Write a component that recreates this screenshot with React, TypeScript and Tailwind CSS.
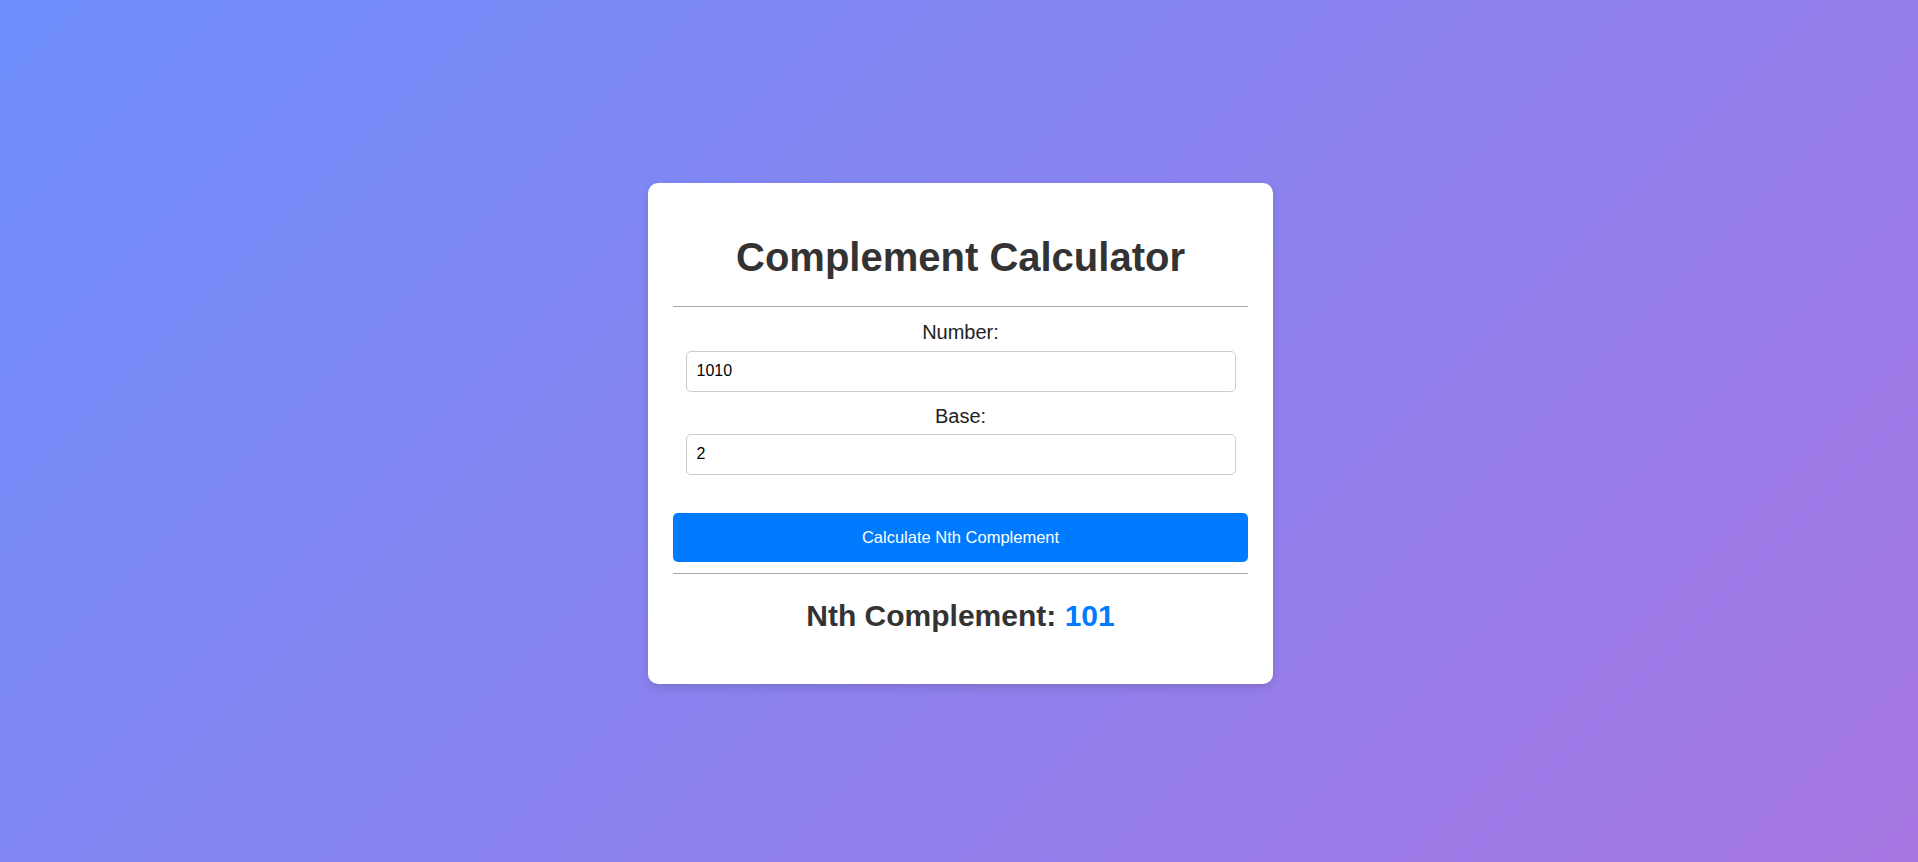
import { useState } from 'react';

function nthComplement(num: string, base: number): string {
    if (!num || !base || base < 2) return '';
    const digits = num.split('').map((d) => parseInt(d, base));
    if (digits.some((d) => isNaN(d))) return '';
    // base^n minus the number
    const n = digits.length;
    const value = parseInt(num, base);
    const result = Math.pow(base, n) - value;
    return result.toString(base).toUpperCase();
}

export default function App() {
    const [number, setNumber] = useState('1010');
    const [base, setBase] = useState('2');
    const [result, setResult] = useState('101');

    return (
        <div
            className="min-h-screen w-full flex items-center justify-center pt-[4px] pl-[3px] bg-[linear-gradient(135deg,#6e8efb,#a777e3)]"
            style={{ fontFamily: '"Liberation Sans", Arial, sans-serif' }}
        >
            <div className="w-[625px] bg-white rounded-[10px] px-[25px] pt-[25px] pb-[25px] shadow-[0_4px_8px_rgba(0,0,0,0.12)]">
                <h1 className="text-[40px] leading-[46px] font-bold text-[#333] text-center mt-[26px] mb-[26px]">
                    Complement Calculator
                </h1>
                <div className="h-px bg-[#a8a8a8]" />

                <label className="block text-[20px] leading-[23px] text-[#222] text-center mt-[14px]">
                    Number:
                </label>
                <input
                    type="text"
                    value={number}
                    onChange={(e) => setNumber(e.target.value)}
                    className="block w-[550px] h-[41px] mx-auto mt-[7px] px-[10px] border border-[#ccc] rounded-[5px] text-[16px] text-black outline-none"
                    style={{ fontFamily: '"Liberation Sans", Arial, sans-serif' }}
                />

                <label className="block text-[20px] leading-[23px] text-[#222] text-center mt-[13px]">
                    Base:
                </label>
                <input
                    type="text"
                    value={base}
                    onChange={(e) => setBase(e.target.value)}
                    className="block w-[550px] h-[41px] mx-auto mt-[6px] px-[10px] border border-[#ccc] rounded-[5px] text-[16px] text-black outline-none"
                    style={{ fontFamily: '"Liberation Sans", Arial, sans-serif' }}
                />

                <button
                    onClick={() => setResult(nthComplement(number, parseInt(base, 10)))}
                    className="block w-full h-[49px] mt-[38px] bg-[#007bff] text-white text-[16.5px] rounded-[5px] cursor-pointer"
                    style={{ fontFamily: '"Liberation Sans", Arial, sans-serif' }}
                >
                    Calculate Nth Complement
                </button>
                <div className="h-px bg-[#a8a8a8] mt-[11px]" />

                <h2 className="text-[30px] leading-[34px] font-bold text-[#333] text-center mt-[25px] mb-[26px]">
                    Nth Complement: <span className="text-[#007bff]">{result}</span>
                </h2>
            </div>
        </div>
    );
}
